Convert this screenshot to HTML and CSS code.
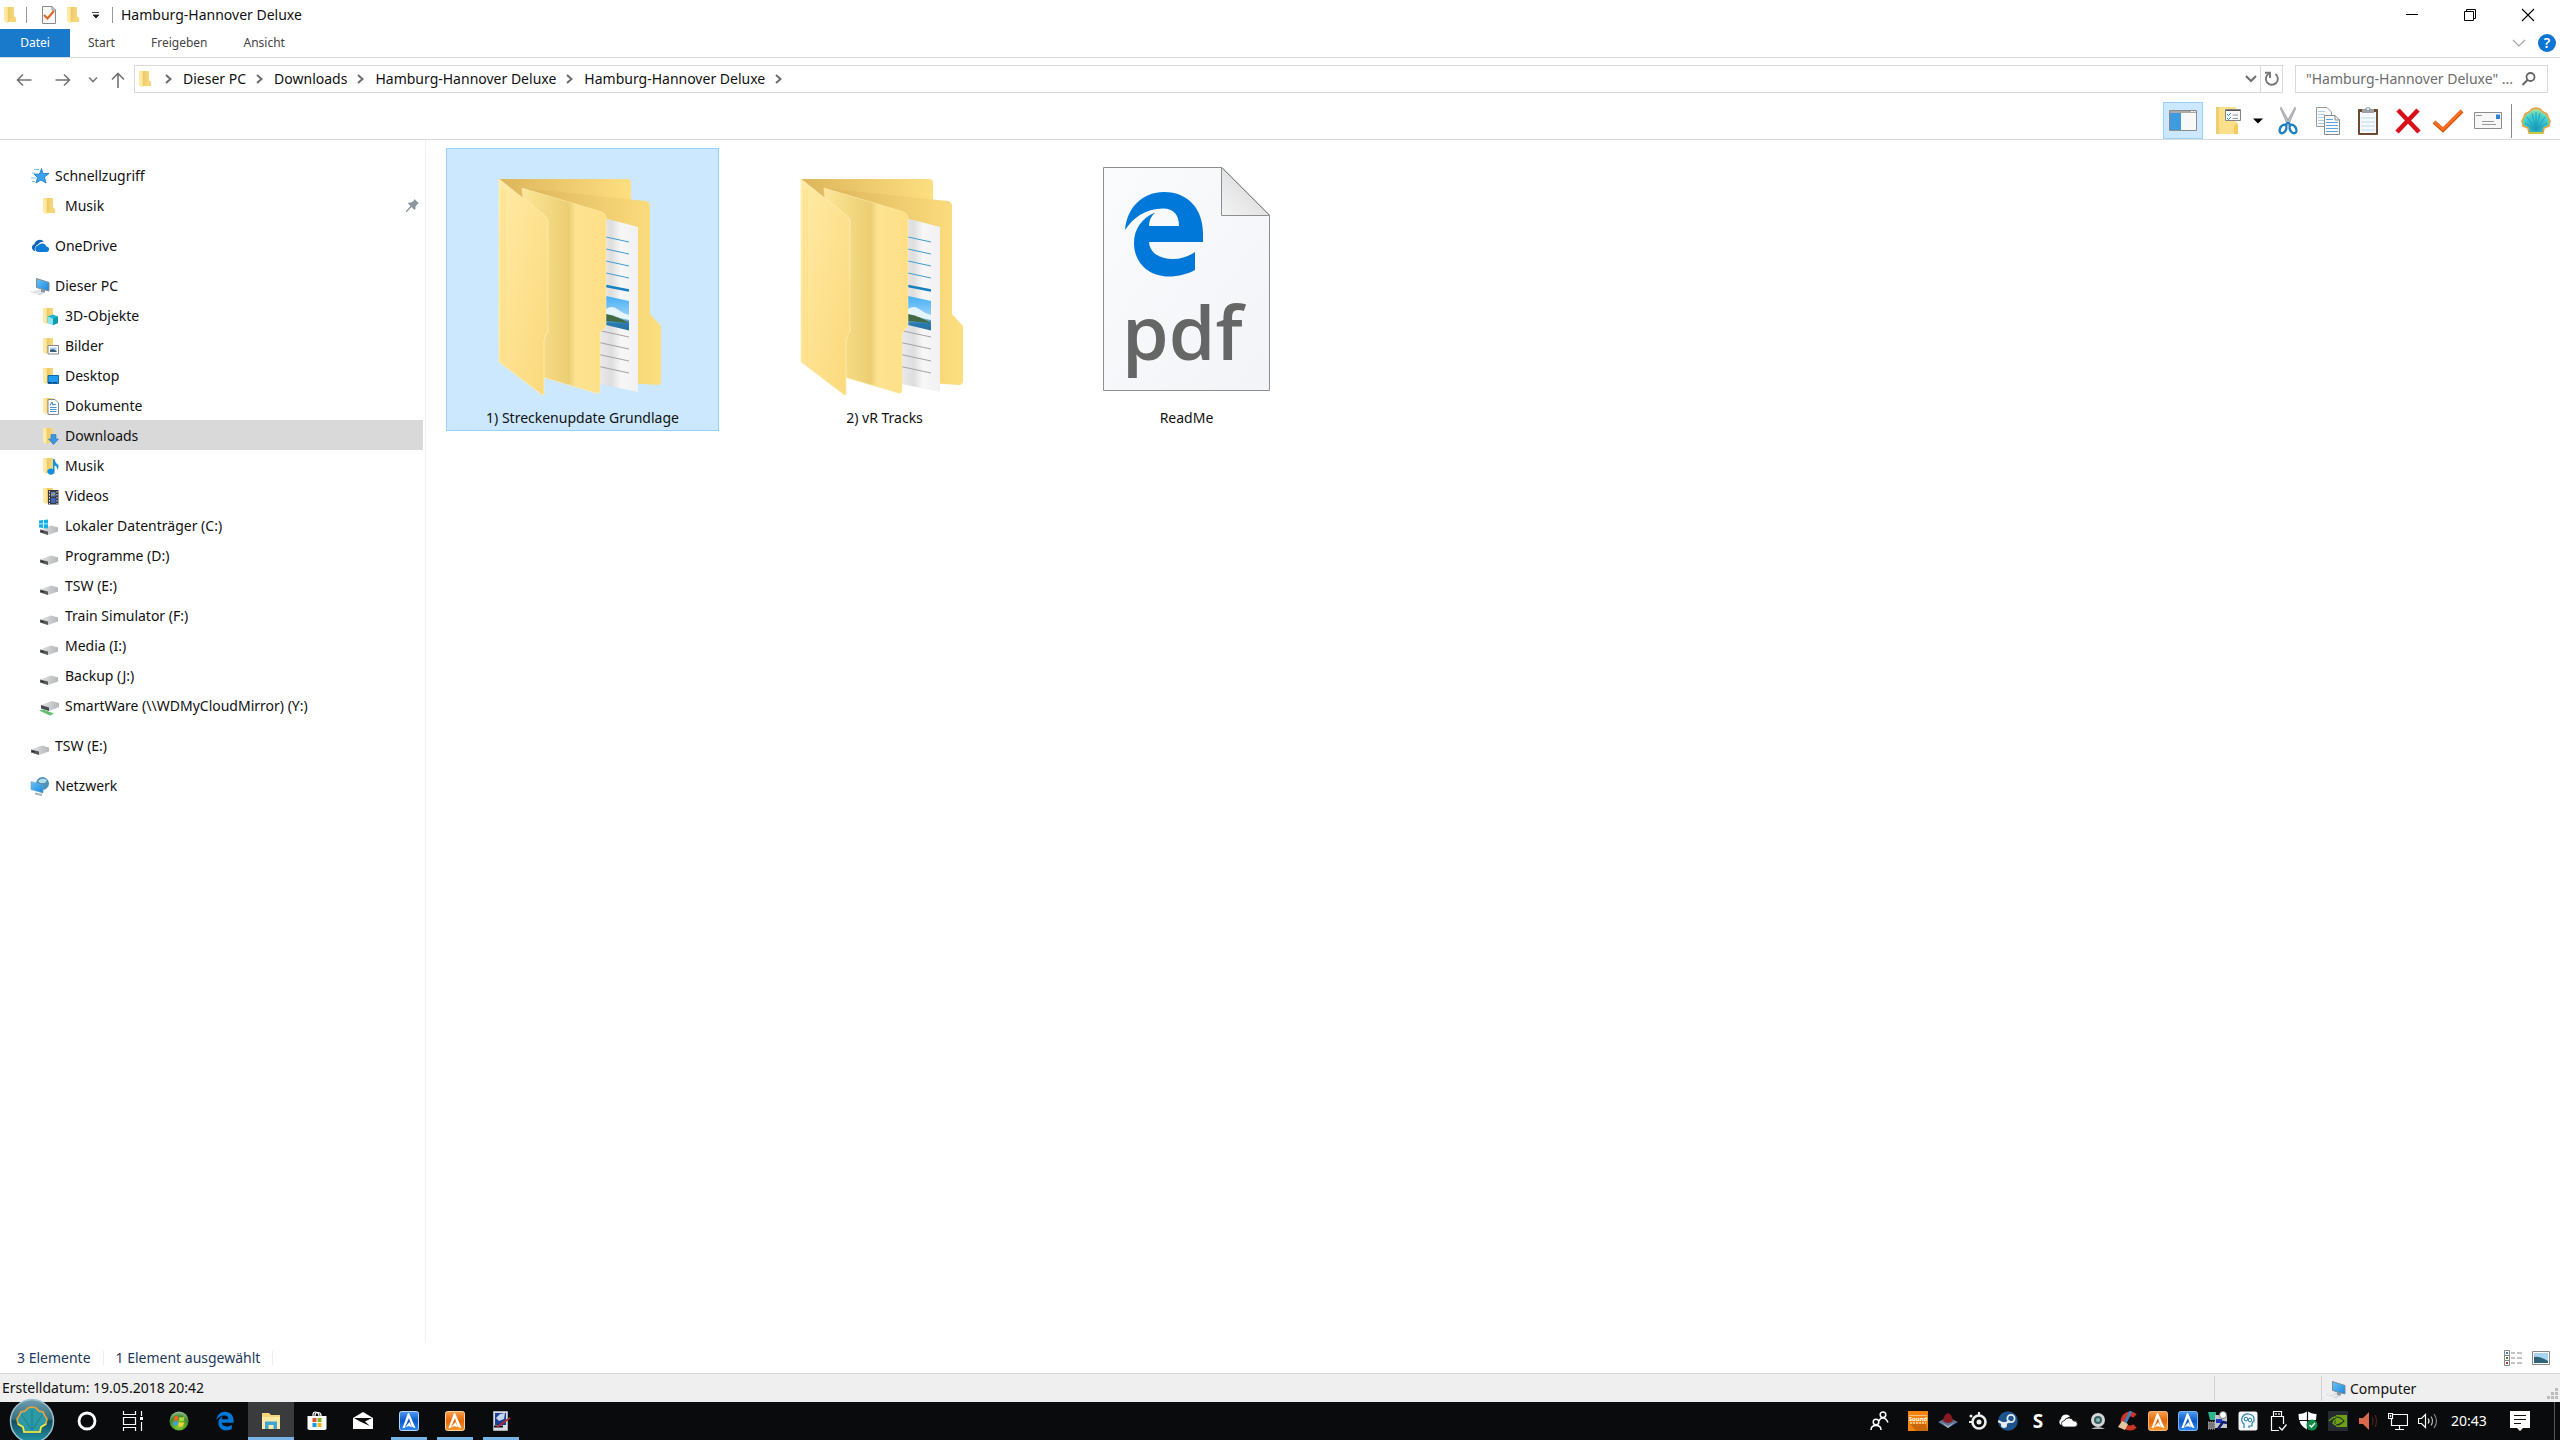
FILE: index.html
```html
<!DOCTYPE html>
<html lang="de">
<head>
<meta charset="utf-8">
<title>Hamburg-Hannover Deluxe</title>
<link rel="stylesheet" href="styles.css">
</head>
<body>
<svg class="sprite" aria-hidden="true">
  <defs>
    <linearGradient id="gFront" x1="0" y1="0" x2="1" y2="1"><stop offset="0" stop-color="#ffeaa6"/><stop offset="1" stop-color="#fbd97b"/></linearGradient>
    <linearGradient id="gBack" x1="0" x2="1"><stop offset="0" stop-color="#ddb55b"/><stop offset="1" stop-color="#fddf80"/></linearGradient>
    <linearGradient id="gMid" x1="0" x2="1"><stop offset="0" stop-color="#fde69c"/><stop offset=".3" stop-color="#f3d983"/><stop offset=".56" stop-color="#ecce73"/><stop offset=".64" stop-color="#fde391"/><stop offset="1" stop-color="#fedf86"/></linearGradient>
    <linearGradient id="gPaper" x1="0" x2="1"><stop offset="0" stop-color="#e9e9eb"/><stop offset=".3" stop-color="#dededf"/><stop offset=".55" stop-color="#f7f7f8"/><stop offset="1" stop-color="#f1f1f2"/></linearGradient>
    <linearGradient id="gPage" x1="0" y1="0" x2="1" y2="1"><stop offset="0" stop-color="#fafbfd"/><stop offset="1" stop-color="#f3f4f7"/></linearGradient>
    <linearGradient id="gCurl" x1="0" y1="1" x2=".7" y2=".3"><stop offset="0" stop-color="#f4f4f4"/><stop offset="1" stop-color="#dcdcdc"/></linearGradient>
    <linearGradient id="gSky" x1="0" y1="0" x2="0" y2="1"><stop offset="0" stop-color="#45aef5"/><stop offset=".6" stop-color="#9bd3f8"/><stop offset=".8" stop-color="#2b7bb0"/><stop offset="1" stop-color="#2a6fa5"/></linearGradient>
    <linearGradient id="gSmall" x1="0" x2="1"><stop offset="0" stop-color="#ffe89f"/><stop offset=".35" stop-color="#fbdf8c"/><stop offset=".45" stop-color="#eecb6b"/><stop offset="1" stop-color="#f8d87b"/></linearGradient>
    <linearGradient id="gScreen" x1="0" y1="0" x2="1" y2="1"><stop offset="0" stop-color="#6cc4fa"/><stop offset="1" stop-color="#1887da"/></linearGradient>
    <linearGradient id="gDrive" x1="0" x2="1"><stop offset="0" stop-color="#e2e3e5"/><stop offset="1" stop-color="#b4b7bb"/></linearGradient>
    <radialGradient id="gShell" cx=".5" cy=".8" r=".8"><stop offset="0" stop-color="#1e9fc0"/><stop offset=".6" stop-color="#41cfd0"/><stop offset="1" stop-color="#b6e69a"/></radialGradient>
    <linearGradient id="gOrb" x1="0" y1="0" x2="0" y2="1"><stop offset="0" stop-color="#6f9daf"/><stop offset=".45" stop-color="#38707f"/><stop offset=".5" stop-color="#124e62"/><stop offset="1" stop-color="#2297a8"/></linearGradient>
    <radialGradient id="gGreen" cx=".5" cy=".75" r=".7"><stop offset="0" stop-color="#8fd636"/><stop offset=".7" stop-color="#3f8a2a"/><stop offset="1" stop-color="#8db988"/></radialGradient>
    <linearGradient id="gBlue" x1="0" y1="0" x2="0" y2="1"><stop offset="0" stop-color="#4e9cf2"/><stop offset=".5" stop-color="#0c59c9"/><stop offset="1" stop-color="#2f8bf5"/></linearGradient>
    <linearGradient id="gOrange" x1="0" y1="0" x2="0" y2="1"><stop offset="0" stop-color="#f7a04c"/><stop offset=".5" stop-color="#e56608"/><stop offset="1" stop-color="#fb9a2c"/></linearGradient>

    <symbol id="folder" viewBox="0 0 20 20"><path d="M4 2H14V17H7L4 15Z" fill="url(#gSmall)"/><path d="M14 11 16 13V17H7V18Z" fill="#f6d778"/><path d="M4 2 7 4.500V18.500L4 16Z" fill="#ffe9a6"/></symbol>
    <symbol id="star" viewBox="0 0 20 20"><path d="M11.500 2.500 13 7.500H19L14.500 11 16 17 11 14 6 17 7.500 11.500 4 8H9.500Z" fill="#3ba3ee" stroke="#1878c4" stroke-width=".8"/><path d="M4 3.500H9M2 7H5M1 12H6M2 15.500H5" stroke="#7fc1ee"/></symbol>
    <symbol id="onedrive" viewBox="0 0 20 20"><path d="M4 15H5A5 5 0 0 1 8 8.500 5.500 5.500 0 0 1 14 6 5.300 5.300 0 0 0 4.500 8 3.800 3.800 0 0 0 4 15Z" fill="#0b62b8"/><path d="M8 16A3.300 3.300 0 0 1 8 9.500 5 5 0 0 1 16.500 10.500 2.800 2.800 0 0 1 17 16Z" fill="#0f7bd8"/></symbol>
    <symbol id="pc" viewBox="0 -1 20 20"><path d="M0 14.500 10 12.500 15 15.500 10 18.500Z" fill="#d5d8dc"/><path d="M2 15 9 13.500M5 17 12 14.500" stroke="#f7f7f7"/><path d="M11 12V15L15 15.500V13Z" fill="#8d979f"/><path d="M6.500 1.500 19 5.500V14L6.500 10.500Z" fill="url(#gScreen)" stroke="#7b8b98"/></symbol>
    <symbol id="drive" viewBox="0 -2 20 20"><path d="M1 11.500 12 7.500 19 9.500V13.500L9 17 1 14.500Z" fill="url(#gDrive)"/><path d="M1 11.500 9 13.500V17L1 14.500Z" fill="#56595c"/><path d="M2 13.200 5 14" stroke="#222"/></symbol>
    <symbol id="drivec" viewBox="0 0 20 20"><use href="#drive" width="20" height="20"/><path d="M0 4.500 4 4V7.500H0ZM4.800 4 9 3.500V7.500H4.800ZM0 8.200H4V12L0 11.500ZM4.800 8.200H9V12.500L4.800 12Z" fill="#15b1e4"/></symbol>
    <symbol id="drivey" viewBox="0 -2 20 20"><path d="M2 7 13 3 20 5V9L10 13 2 10.500Z" fill="url(#gDrive)"/><path d="M2 7 10 9.500V13L2 10.500Z" fill="#4a4d50"/><path d="M0 12.500 4 11.500 15 15.500 11 17.500Z" fill="#5fc06c"/></symbol>
    <symbol id="net" viewBox="0 0 20 20"><circle cx="12.500" cy="7.500" r="6.500" fill="#4d93b8"/><path d="M8 5Q12 1 17 4L15 7 10 7Z" fill="#b7dce9"/><path d="M1 5.500 13 9V17L1 13.500Z" fill="url(#gScreen)" stroke="#6b9fc6" stroke-width=".6"/><path d="M5 17.500 12 19" stroke="#a9b3ba" stroke-width="2"/></symbol>
    <symbol id="f3d" viewBox="0 0 20 20"><use href="#folder"/><path d="M8.500 10.500 14 8.500 19 10.500V17L14 19 8.500 17Z" fill="#22b5cb"/><path d="M8.500 10.500 14 12.500V19L8.500 17Z" fill="#8be5ec"/><path d="M14 12.500 19 10.500V17L14 19Z" fill="#0d98b4"/></symbol>
    <symbol id="fpic" viewBox="0 0 20 20"><use href="#folder"/><path d="M9 9.500H19.500V18H9Z" fill="#fff" stroke="#858b92"/><path d="M11 11.500H17.500V16H11Z" fill="#a9cdf0"/><path d="M11 14 14 13 17.500 15V16H11Z" fill="#3b5d7d"/></symbol>
    <symbol id="fdesk" viewBox="0 0 20 20"><use href="#folder"/><path d="M9 9.500H19.500V17.500H9Z" fill="#1e9df1" stroke="#1169a8"/><path d="M9 16.500H19" stroke="#083d68" stroke-dasharray="4 1"/></symbol>
    <symbol id="fdoc" viewBox="0 0 20 20"><use href="#folder"/><path d="M9 3.500H16L19.500 7V18.500H9Z" fill="#fff" stroke="#858b92"/><path d="M11 11.500H17.500M11 13.500H17.500M11 15.500H17.500M14 8.500H17" stroke="#4495d2"/><path d="M11 9.500 13 6 14 9.500" fill="none" stroke="#2f86c8"/></symbol>
    <symbol id="fdown" viewBox="0 0 20 20"><use href="#folder"/><path d="M12 8.500H17V13H19.500L14.500 18.500 9.500 13H12Z" fill="#3e94de" stroke="#2277c0" stroke-width=".6"/></symbol>
    <symbol id="fmus" viewBox="0 0 20 20"><use href="#folder"/><path d="M14 3H15.500Q16 7 19.500 9 20 12 18 14 18.500 10 15.500 9.500V15.500A3.600 3.200 0 1 1 14 13Z" fill="#1291e4"/></symbol>
    <symbol id="fvid" viewBox="0 0 20 20"><use href="#folder"/><path d="M9 4H19.500V18.500H9Z" fill="#3a3a3f"/><path d="M10.500 5V18M18 5V18" stroke="#ddd" stroke-dasharray="1.500 1.500"/><path d="M12 6H16.500V10.500H12Z" fill="#5f87c9"/><path d="M12 12H16.500V17H12Z" fill="#3768c4"/><path d="M12 9 16 7.500" stroke="#d0a54e"/></symbol>
    <symbol id="shell" viewBox="0 0 30 28"><path d="M8 26 7 21 2 19 1 14 3 10 4 7 8 5 11 2 15 1 19 2 22 5 26 7 27 10 29 14 28 19 23 21 22 26Z" fill="url(#gShell)" stroke="#f0a23a" stroke-width="1.600" stroke-linejoin="round"/><path d="M15 24 6 10M15 24 11 6M15 24V5M15 24 19 6M15 24 24 10M15 24 4 16M15 24 26 16" stroke="#1b9ab5" stroke-width=".8"/><path d="M8 26H22" stroke="#cfc63d" stroke-width="2"/></symbol>
    <symbol id="avira" viewBox="0 0 20 20"><path d="M10 2 16.500 17Q12.500 17 11.500 12L10 7 5.500 17H3.500L9 2Z M10.500 11 13 16.500Q8.500 14 5.500 17Z" fill="#fff"/></symbol>
    <symbol id="bigfolder" viewBox="0 0 256 256"><g transform="translate(44 29)">
      <path d="M0 1H128Q132 1 132 5V60H24Z" fill="url(#gBack)"/>
      <path d="M23 10 147 23Q151 24 151 28V136L162 148V203Q162 207 158 207L100 203Z" fill="url(#gBack)"/>
      <path d="M101 39 139 49V214L101 206Z" fill="url(#gPaper)"/>
      <path d="M107 59 130 64M107 71 130 76M107 83 130 88M107 95 130 100" stroke="#3f9dd2"/>
      <path d="M107 108 130 112.500" stroke="#1680c0" stroke-width="2.500"/>
      <path d="M107 118 130 123V152.500L107 147Z" fill="url(#gSky)"/>
      <path d="M107 131Q113 127 118 131T130 137V142L107 137Z" fill="#e6f4fc"/><path d="M107 136Q118 138 130 145L107 143Z" fill="#416b45"/>
      <path d="M100 152.500 130 159M100 164.500 130 171M100 176.500 130 183M100 188.500 130 195" stroke="#a3a3a5"/>
      <path d="M23 10 103 34Q107 36 107 40V148L101 155V212Q101 216 97 215L43 199Z" fill="url(#gMid)" stroke="#ffedb0" stroke-width=".6"/>
      <path d="M0 1 46 38Q49 40 49 44V152Q49 155 47 157L45 162V215Q45 219 42 216L0 184Z" fill="url(#gFront)" stroke="#ffeeb4" stroke-width=".8"/>
      <path d="M3 11V180M6 11V183M30 17 35 19V28" fill="none" stroke="#fbdd78" stroke-width=".8"/>
    </g></symbol>
  </defs>
</svg>

<header class="window-head">
  <div class="titlebar">
    <svg class="ico20"><use href="#folder"/></svg>
    <span class="vsep"></span>
    <button class="qat" aria-label="Eigenschaften"><svg width="16" height="20" viewBox="0 0 16 20"><path d="M1.500 1.500H11L14.500 5V18.500H1.500Z" fill="#f8f8f8" stroke="#8a8a8a"/><path d="M11 1.500V5H14.500" fill="none" stroke="#8a8a8a"/><path d="M3 10 6.500 13.500 13 6" fill="none" stroke="#e2611c" stroke-width="2"/></svg></button>
    <button class="qat" aria-label="Neuer Ordner"><svg class="ico20"><use href="#folder"/></svg></button>
    <button class="qat more" aria-label="Schnellzugriff anpassen"><svg width="10" height="8" viewBox="0 0 10 8"><path d="M1 1.500H8M2 4H8L5 7Z" stroke="#222" fill="#222" stroke-width=".8"/></svg></button>
    <span class="vsep last"></span>
    <h1 class="title">Hamburg-Hannover Deluxe</h1>
    <div class="win-controls">
      <button aria-label="Minimieren"><svg width="14" height="14" viewBox="0 0 14 14"><path d="M1 6.500H13" stroke="#000"/></svg></button>
      <button aria-label="Wiederherstellen"><svg width="14" height="14" viewBox="0 0 14 14"><path d="M1.500 3.500H10.500V12.500H1.500ZM3.500 3V1.500H12.500V10.500H11" fill="none" stroke="#000"/></svg></button>
      <button aria-label="Schließen"><svg width="14" height="14" viewBox="0 0 14 14"><path d="M1 1 13 13M13 1 1 13" stroke="#000" stroke-width="1.100"/></svg></button>
    </div>
  </div>
  <nav class="ribbon">
    <button class="tab file">Datei</button>
    <button class="tab">Start</button>
    <button class="tab">Freigeben</button>
    <button class="tab">Ansicht</button>
    <span class="grow"></span>
    <button class="expand" aria-label="Menüband erweitern"><svg width="14" height="8" viewBox="0 0 14 8"><path d="M1 1 7 7 13 1" fill="none" stroke="#a5a5a5" stroke-width="1.200"/></svg></button>
    <button class="help" aria-label="Hilfe">?</button>
  </nav>
  <div class="addressrow">
    <div class="navbtns">
      <button aria-label="Zurück"><svg width="16" height="14" viewBox="0 0 16 14"><path d="M15.500 7H1.500M7 1.500 1.500 7 7 12.500" fill="none" stroke="#737373" stroke-width="1.600"/></svg></button>
      <button aria-label="Vorwärts"><svg width="16" height="14" viewBox="0 0 16 14"><path d="M.5 7H14.500M9 1.500 14.500 7 9 12.500" fill="none" stroke="#737373" stroke-width="1.600"/></svg></button>
      <button class="small" aria-label="Verlauf"><svg width="10" height="8" viewBox="0 0 10 8"><path d="M1 1.500 5 5.500 9 1.500" fill="none" stroke="#7c7c7c" stroke-width="1.600"/></svg></button>
      <button aria-label="Nach oben"><svg width="14" height="16" viewBox="0 0 14 16"><path d="M7 16V2M1 7.500 7 1.500 13 7.500" fill="none" stroke="#737373" stroke-width="1.600"/></svg></button>
    </div>
    <div class="address">
      <svg class="ico20"><use href="#folder"/></svg>
      <svg class="chev" viewBox="0 0 7 10"><path d="M1 1 5.500 5 1 9"/></svg><a href="#">Dieser PC</a>
      <svg class="chev" viewBox="0 0 7 10"><path d="M1 1 5.500 5 1 9"/></svg><a href="#">Downloads</a>
      <svg class="chev" viewBox="0 0 7 10"><path d="M1 1 5.500 5 1 9"/></svg><a href="#">Hamburg-Hannover Deluxe</a>
      <svg class="chev" viewBox="0 0 7 10"><path d="M1 1 5.500 5 1 9"/></svg><a href="#">Hamburg-Hannover Deluxe</a>
      <svg class="chev" viewBox="0 0 7 10"><path d="M1 1 5.500 5 1 9"/></svg>
      <span class="grow"></span>
      <button class="drop" aria-label="Vorherige Orte"><svg width="12" height="8" viewBox="0 0 12 8"><path d="M1 1 6 6 11 1" fill="none" stroke="#6d6d6d" stroke-width="2"/></svg></button>
      <button class="refresh" aria-label="Aktualisieren"><svg width="16" height="16" viewBox="0 0 16 16"><path d="M5 2.500A6 6 0 1 0 11.500 3" fill="none" stroke="#777" stroke-width="1.900"/><path d="M1 1.800H6V7" fill="none" stroke="#777" stroke-width="1.900"/></svg></button>
    </div>
    <div class="search">
      <input type="text" aria-label="Suchen" placeholder="&quot;Hamburg-Hannover Deluxe&quot; ...">
      <svg width="16" height="16" viewBox="0 0 16 16"><circle cx="9.500" cy="6" r="4" fill="none" stroke="#666" stroke-width="1.800"/><path d="M6.500 9 1.500 14" stroke="#666" stroke-width="2"/></svg>
    </div>
  </div>
  <div class="toolbar">
    <button class="tool on" aria-label="Navigationsbereich"><svg width="28" height="22" viewBox="0 0 28 22"><path d="M.5 .5H27.500V20.500H.5Z" fill="#f8f8f8" stroke="#8c8c8c"/><path d="M1 1H27V3H1Z" fill="#a9a9a9"/><path d="M1 3H12V20H1Z" fill="#3f9ae0"/><path d="M22 1.500H24M25 1.500H26.500" stroke="#fff"/></svg></button>
    <button class="tool wide" aria-label="Ordneroptionen"><svg width="26" height="30" viewBox="0 0 26 30"><path d="M1 1H21V28H1Z" fill="#fbe08b"/><path d="M1 1H4V28H1Z" fill="#efcd72"/><path d="M19 28V20L22 16 23 20V28Z" fill="#f5c95d"/><path d="M10.500 3.500H25.500V14.500H10.500Z" fill="#f7f9fb" stroke="#858585"/><path d="M11 4.500H25" stroke="#555"/><path d="M12 8 13.500 9.500 16 7M12 12 13.500 13.500 16 11" fill="none" stroke="#2a86cf"/><path d="M17.500 9H23M17.500 12.500H23" stroke="#999"/></svg><svg width="10" height="6" viewBox="0 0 10 6"><path d="M0 .5H10L5 5.500Z"/></svg></button>
    <button class="tool" aria-label="Ausschneiden"><svg width="20" height="30" viewBox="0 0 20 30"><path d="M3 1 12 17 10 20 2.500 3ZM17 1 8 17 10 20 17.500 3Z" fill="#b9bdc2" stroke="#8b9197" stroke-width=".6"/><ellipse cx="5" cy="23" rx="3" ry="4.500" transform="rotate(28 5 23)" fill="none" stroke="#1d80c3" stroke-width="2.400"/><ellipse cx="15" cy="23" rx="3" ry="4.500" transform="rotate(-28 15 23)" fill="none" stroke="#1d80c3" stroke-width="2.400"/><path d="M7 19 10 16.500 13 19" fill="none" stroke="#1d80c3" stroke-width="2"/></svg></button>
    <button class="tool" aria-label="Kopieren"><svg width="26" height="30" viewBox="0 0 26 30"><path d="M1.500 1.500H12L16.500 6V20.500H1.500Z" fill="#fafafa" stroke="#9a9a9a"/><path d="M3 5.500H10M3 8.500H10M3 11.500H9M3 14.500H9M3 17.500H9" stroke="#a9cfec"/><path d="M9.500 9.500H20L24.500 14V28.500H9.500Z" fill="#fafafa" stroke="#8a8a8a"/><path d="M20 9.500V14H24.500" fill="none" stroke="#8a8a8a"/><path d="M11 13.500H18M11 16.500H23M11 19.500H23M11 22.500H23M11 25.500H23" stroke="#5aa5de"/></svg></button>
    <button class="tool" aria-label="Einfügen"><svg width="22" height="30" viewBox="0 0 22 30"><rect x="1" y="3" width="20" height="26" rx="1" fill="#6e4a31"/><path d="M3 6H19V27H3Z" fill="#f6f9fb"/><path d="M4 12H18M4 16H18M4 20H18M4 24H18" stroke="#bcd9ee"/><path d="M5 3H8Q11-1 14 3H17V7H5Z" fill="#9b9fa3"/><circle cx="11" cy="3" r="1" fill="#fff"/></svg></button>
    <button class="tool" aria-label="Löschen"><svg width="26" height="26" viewBox="0 0 26 26"><path d="M3 2 24 24M23 2 2 24" stroke="#d90f1c" stroke-width="4.600"/></svg></button>
    <button class="tool" aria-label="Eigenschaften"><svg width="32" height="26" viewBox="0 0 32 26"><path d="M2 14 11 22 30 3" fill="none" stroke="#c9500c" stroke-width="4"/><path d="M2.500 14 11 21.500 29.500 3" fill="none" stroke="#f8701c" stroke-width="2.600"/></svg></button>
    <button class="tool" aria-label="E-Mail"><svg width="28" height="18" viewBox="0 0 28 18"><path d="M.5 .5H27.500V16.500H.5Z" fill="#f7f7f7" stroke="#8c8c8c"/><path d="M2 3.500H8M8 9.500H20M8 12.500H22" stroke="#999"/><path d="M22 2.500H26V7H22Z" fill="#2d84d6"/></svg></button>
    <span class="toolsep"></span>
    <button class="tool" aria-label="Classic Shell"><svg width="30" height="28"><use href="#shell"/></svg></button>
  </div>
</header>

<main class="panes">
  <nav class="tree" aria-label="Navigation">
    <ul>
      <li class="top"><a href="#"><svg class="ico20"><use href="#star"/></svg>Schnellzugriff</a></li>
      <li><a href="#"><svg class="ico20"><use href="#folder"/></svg>Musik<svg class="pin" viewBox="0 0 13 13"><path d="M8.500 0 13 4.500 11.500 5 9.500 7.500V10L8.500 11 5.500 8 1 13 0 13 0 12 4.500 7 2 4.500 3 3.500H5.500L8 1.500Z" fill="#8d959e"/></svg></a></li>
    </ul>
    <ul><li class="top"><a href="#"><svg class="ico20"><use href="#onedrive"/></svg>OneDrive</a></li></ul>
    <ul>
      <li class="top"><a href="#"><svg class="ico20"><use href="#pc"/></svg>Dieser PC</a></li>
      <li><a href="#"><svg class="ico20"><use href="#f3d"/></svg>3D-Objekte</a></li>
      <li><a href="#"><svg class="ico20"><use href="#fpic"/></svg>Bilder</a></li>
      <li><a href="#"><svg class="ico20"><use href="#fdesk"/></svg>Desktop</a></li>
      <li><a href="#"><svg class="ico20"><use href="#fdoc"/></svg>Dokumente</a></li>
      <li class="current"><a href="#"><svg class="ico20"><use href="#fdown"/></svg>Downloads</a></li>
      <li><a href="#"><svg class="ico20"><use href="#fmus"/></svg>Musik</a></li>
      <li><a href="#"><svg class="ico20"><use href="#fvid"/></svg>Videos</a></li>
      <li><a href="#"><svg class="ico20"><use href="#drivec"/></svg>Lokaler Datenträger (C:)</a></li>
      <li><a href="#"><svg class="ico20"><use href="#drive"/></svg>Programme (D:)</a></li>
      <li><a href="#"><svg class="ico20"><use href="#drive"/></svg>TSW (E:)</a></li>
      <li><a href="#"><svg class="ico20"><use href="#drive"/></svg>Train Simulator (F:)</a></li>
      <li><a href="#"><svg class="ico20"><use href="#drive"/></svg>Media (I:)</a></li>
      <li><a href="#"><svg class="ico20"><use href="#drive"/></svg>Backup (J:)</a></li>
      <li><a href="#"><svg class="ico20"><use href="#drivey"/></svg>SmartWare (\\WDMyCloudMirror) (Y:)</a></li>
    </ul>
    <ul><li class="top"><a href="#"><svg class="ico20"><use href="#drive"/></svg>TSW (E:)</a></li></ul>
    <ul><li class="top"><a href="#"><svg class="ico20"><use href="#net"/></svg>Netzwerk</a></li></ul>
  </nav>
  <section class="files" aria-label="Dateien">
    <a class="file-item selected" href="#"><svg width="256" height="256"><use href="#bigfolder"/></svg><span>1) Streckenupdate Grundlage</span></a>
    <a class="file-item" href="#"><svg width="256" height="256"><use href="#bigfolder"/></svg><span>2) vR Tracks</span></a>
    <a class="file-item" href="#"><svg width="256" height="256" viewBox="0 0 256 256"><g transform="translate(44 18)">
      <path d="M.5 .5H119L166.500 48V223.500H.5Z" fill="url(#gPage)" stroke="#8e8e90"/>
      <path d="M118.500 .5V48.500H166.500Z" fill="url(#gCurl)" stroke="#8e8e90"/>
      <path d="M22 63C24 40 40 25 61 25C86 25 100 43 100 66V75H46C47 87 58 92 70 92C79 92 86 89 92 85V103C85 107 75 109.500 66 109.500C45 109.500 31 95 31 76C31 62 39 51 52 45.500C48 49 46 54 46 59H76C76 48 71 41.500 60 41.500C42 41.500 30 51 22 63Z" fill="#0078d9"/>
      <text class="pdf-text" x="19" y="193">pdf</text></g></svg><span>ReadMe</span></a>
  </section>
</main>

<footer class="status">
  <div class="statusbar">
    <span class="stat">3 Elemente</span><span class="stat">1 Element ausgewählt</span>
    <span class="grow"></span>
    <button aria-label="Details"><svg width="20" height="18" viewBox="0 0 20 18"><path d="M1.500 1.500H6.500V16.500H1.500ZM1.500 6.500H6.500M1.500 11.500H6.500M8 4H12M14 4H19M8 9H12M14 9H19M8 14H12M14 14H19" fill="none" stroke="#888"/><path d="M3 3H5V5H3Z" fill="#4586b5"/><path d="M3 8H5V10H3Z" fill="#557d45"/><path d="M3 13H5V15H3Z" fill="#b03a2a"/></svg></button>
    <button aria-label="Große Symbole"><svg width="20" height="18" viewBox="0 0 20 18"><path d="M1.500 2.500H18.500V15.500H1.500Z" fill="#fff" stroke="#888"/><path d="M3 4H17V14H3Z" fill="#a8d3f3"/><path d="M3 8Q9 7 17 12V14H3Z" fill="#2d6577"/></svg></button>
  </div>
  <div class="classicbar">
    <span class="date">Erstelldatum: 19.05.2018 20:42</span>
    <span class="cell"></span>
    <span class="cell zone"><svg class="ico20"><use href="#pc"/></svg>Computer</span>
    <svg class="grip" width="12" height="12" viewBox="0 0 12 12"><path d="M8 0H11V3H8ZM4 4H7V7H4ZM8 4H11V7H8ZM0 8H3V11H0ZM4 8H7V11H4ZM8 8H11V11H8Z" fill="#bcbcbc"/></svg>
  </div>
</footer>

<footer class="taskbar">
  <button class="start" aria-label="Start"><svg width="46" height="46" viewBox="0 0 46 46"><circle cx="23" cy="23" r="21.500" fill="url(#gOrb)" stroke="#9cc3cf" stroke-width="1.500"/><path d="M15 34 14 29 9 26 8 21 10 18 12 14 16 13 19 10 23 9 27 10 30 13 34 14 36 18 38 21 37 26 32 29 31 34Z" fill="#2c9aa5" stroke="#e9a53c" stroke-width="1.600"/><path d="M9 26 14 29 15 34H31L32 29 37 26" fill="none" stroke="#e3ea4a" stroke-width="1.600"/><path d="M23 32V12M23 32 13 17M23 32 33 17" stroke="#1c7f93"/></svg></button>
  <button class="task" aria-label="Cortana"><svg width="20" height="20" viewBox="0 0 20 20"><circle cx="10" cy="10" r="8" fill="none" stroke="#fff" stroke-width="2.800"/></svg></button>
  <button class="task" aria-label="Taskansicht"><svg width="22" height="20" viewBox="0 0 22 20"><path d="M1.500 0V3.500H13.500V0M1.500 20V16.500H13.500V20M1.500 6.500H13.500V13.500H1.500ZM19.500 0V5M19.500 11V20" fill="none" stroke="#fff" stroke-width="1.200"/><path d="M18 6H21V9H18Z" fill="#fff"/></svg></button>
  <button class="task" aria-label="Media Center"><svg width="20" height="20" viewBox="0 0 20 20"><circle cx="10" cy="10" r="9.500" fill="url(#gGreen)"/><path d="M5 6Q7 4.500 9.500 5.500L9 9.500Q7 9 4.500 10Z" fill="#e8622c"/><path d="M10.500 6Q13 7 15.500 5.500L15 9.500Q12 11 10 9.500Z" fill="#a9d941"/><path d="M4.500 11Q7 10 9 10.500L8.500 14.500Q6 14 4 14.500Z" fill="#3f9be6"/><path d="M10 11Q12 12 15 11L14 15Q12 16 9.500 15Z" fill="#fbcf36"/></svg></button>
  <button class="task" aria-label="Edge"><svg width="18" height="20" viewBox="20 23 82 88"><path d="M22 63C24 40 40 25 61 25C86 25 100 43 100 66V75H46C47 87 58 92 70 92C79 92 86 89 92 85V103C85 107 75 109.500 66 109.500C45 109.500 31 95 31 76C31 62 39 51 52 45.500C48 49 46 54 46 59H76C76 48 71 41.500 60 41.500C42 41.500 30 51 22 63Z" fill="#0078d9"/></svg></button>
  <button class="task active" aria-label="Explorer"><svg width="20" height="18" viewBox="0 0 20 18"><path d="M1 1H8L10 3H19V17H1Z" fill="#f6d57a"/><path d="M1 5H19V17H1Z" fill="#fde8a4"/><path d="M4 17V9.500H16V17H12.500V13H7.500V17Z" fill="#3fa5d8"/></svg></button>
  <button class="task" aria-label="Store"><svg width="20" height="20" viewBox="0 0 20 20"><path d="M6 6V4Q6 1 8.500 1T12 4V6M8 6V4Q8 1.500 11 1.500T14 4.500V6" fill="none" stroke="#fff" stroke-width="1.200"/><path d="M.5 5H19.500V18L18 19H2L.5 18Z" fill="#fff"/><path d="M5.500 7H9.500V11H5.500Z" fill="#e2512c"/><path d="M10.500 7H14.500V11H10.500Z" fill="#7cb71d"/><path d="M5.500 12H9.500V16H5.500Z" fill="#1499dd"/><path d="M10.500 12H14.500V16H10.500Z" fill="#f5b41c"/></svg></button>
  <button class="task" aria-label="Mail"><svg width="20" height="18" viewBox="0 0 20 18"><path d="M0 6 10 0 20 6V17H0Z" fill="#fff"/><path d="M1 6H19L12 9.500 17 14 7 9.500Z" fill="#0b0b0c"/></svg></button>
  <button class="task running" aria-label="Avira"><svg width="20" height="20" viewBox="0 0 20 20"><rect x=".5" y=".5" width="19" height="19" rx="2" fill="url(#gBlue)" stroke="#b9d6f6"/><use href="#avira"/></svg></button>
  <button class="task running" aria-label="Avira Antivirus"><svg width="20" height="20" viewBox="0 0 20 20"><rect x=".5" y=".5" width="19" height="19" rx="2" fill="url(#gOrange)" stroke="#f9d3a8"/><use href="#avira"/></svg></button>
  <button class="task running" aria-label="Zusi"><svg width="20" height="20" viewBox="0 0 20 20"><path d="M2.500 .5H16.500V19.500H2.500Z" fill="#d6dde8" stroke="#a9abad"/><path d="M4 2H15V14H4Z" fill="#1c3f92"/><path d="M5 7 9 3 14 2 13 8 8 10Z" fill="#c4d5ee"/><path d="M3 15.500H12" stroke="#111" stroke-width="2"/><path d="M6 16 19 7" stroke="#a82c35" stroke-width="1.800"/></svg></button>
  <span class="grow"></span>
  <button class="tray people" aria-label="Kontakte"><svg width="20" height="20" viewBox="0 0 20 20"><circle cx="6" cy="11" r="2.800"/><circle cx="13" cy="3.800" r="2.800"/><path d="M1 19Q1 14.500 6 14.500T11 19M9 10Q10 7 13 7T18 11.500"/></svg></button>
  <button class="tray" aria-label="Sound Blaster"><svg width="20" height="20" viewBox="0 0 20 20"><path d="M0 0H20V20H0Z" fill="#f5840f"/><path d="M2 13H18L20 20H8Z" fill="#c9670a"/><text class="sound-text" x="10" y="10">Sound</text><path d="M2 12H18" stroke="#fff" stroke-dasharray="2 1"/><path d="M1 4.500H19" stroke="#fff" stroke-width=".5"/></svg></button>
  <button class="tray" aria-label="Treiber"><svg width="20" height="20" viewBox="0 0 20 20"><path d="M0 11 10 6 20 11 10 17Z" fill="#5b7492"/><path d="M3 11 10 15 17 11 10 17Z" fill="#a5b4c8"/><path d="M5 10Q6 3 10 2Q14 3 15 10Q10 14 5 10Z" fill="#8a1822"/></svg></button>
  <button class="tray" aria-label="SteelSeries"><svg width="20" height="20" viewBox="0 0 20 20"><circle cx="11" cy="11" r="6.500" fill="none" stroke="#eee" stroke-width="2.600"/><circle cx="11" cy="11" r="2.500" fill="#eee"/><circle cx="3" cy="5" r="1.500" fill="#eee"/><path d="M1 11H5M11 1V5" stroke="#eee" stroke-width="2.200"/></svg></button>
  <button class="tray" aria-label="Steam"><svg width="20" height="20" viewBox="0 0 20 20"><circle cx="10" cy="10" r="9.800" fill="#1d548c"/><circle cx="13" cy="7.500" r="3.600" fill="none" stroke="#e7edf3" stroke-width="1.800"/><path d="M0 10 6 13 12 10" fill="none" stroke="#e7edf3" stroke-width="2.400"/><circle cx="6" cy="14" r="3" fill="#e7edf3"/></svg></button>
  <button class="tray s" aria-label="Sonic">S</button>
  <button class="tray" aria-label="OneDrive"><svg width="20" height="20" viewBox="0 0 20 20"><path d="M3 14A3.500 3.500 0 0 1 3 8 5 5 0 0 1 12 5.500L7 8 5 14Z" fill="#fff"/><path d="M6 16A3.300 3.300 0 0 1 6.500 9.500 5 5 0 0 1 15.500 10A3 3 0 0 1 17 16Z" fill="#fff" stroke="#111" stroke-width=".8"/></svg></button>
  <button class="tray" aria-label="Webcam"><svg width="20" height="20" viewBox="0 0 20 20"><path d="M3 18Q10 14 17 18Z" fill="#bbb"/><circle cx="10" cy="9" r="7" fill="#d4d6d6"/><circle cx="10" cy="9" r="4" fill="#375d60"/><circle cx="10" cy="9" r="2" fill="#7dbbb5"/></svg></button>
  <button class="tray" aria-label="CCleaner"><svg width="20" height="20" viewBox="0 0 20 20"><path d="M17 5A7 7 0 1 0 17 15" fill="none" stroke="#cf3526" stroke-width="5"/><path d="M13 0 7 12" stroke="#3e7ec0" stroke-width="3"/><path d="M4 10 10 13 7 19 0 16Z" fill="#e4c79d"/></svg></button>
  <button class="tray" aria-label="Avira Antivirus"><svg width="20" height="20" viewBox="0 0 20 20"><rect x=".5" y=".5" width="19" height="19" rx="2" fill="url(#gOrange)" stroke="#f2b577"/><use href="#avira"/></svg></button>
  <button class="tray" aria-label="Avira"><svg width="20" height="20" viewBox="0 0 20 20"><rect x=".5" y=".5" width="19" height="19" rx="2" fill="url(#gBlue)" stroke="#7fb4f2"/><use href="#avira"/></svg></button>
  <button class="tray" aria-label="Netzwerkmonitor"><svg width="20" height="20" viewBox="0 0 20 20"><path d="M0 1H8V9H2Z" fill="#2bb78d"/><path d="M7 4H19V17H7Z" fill="#c3c6c8"/><circle cx="15" cy="4" r="3.500" fill="#fff" stroke="#777"/><path d="M8 8H14V12H8Z" fill="#1836c0"/><path d="M0 11H7V18H0Z" fill="#777" stroke="#bbb" stroke-dasharray="1 1"/><path d="M10 18 15 11 19 12" stroke="#101c6b" stroke-width="2.500" fill="none"/></svg></button>
  <button class="tray" aria-label="Assistent"><svg width="20" height="20" viewBox="0 0 20 20"><rect x=".5" y=".5" width="19" height="19" rx="2" fill="#f4f8fa"/><path d="M6 17V13Q3 11 4 7 6 2 11 3 17 4 16 10L14 12V15H11V17" fill="none" stroke="#2a82ad" stroke-width="1.200"/><circle cx="8" cy="8" r="1.800" fill="none" stroke="#2a82ad"/><circle cx="12" cy="9" r="1.800" fill="none" stroke="#2a82ad"/></svg></button>
  <button class="tray" aria-label="USB"><svg class="line" width="20" height="22" viewBox="0 0 20 22"><path d="M5.500 6.500V1.500H13.500V6.500M11 20.500H3.500V6.500H15.500V14M8 3V5M11 3V5M11 17 14 20 18.500 14.500"/></svg></button>
  <button class="tray" aria-label="Sicherheit"><svg width="20" height="20" viewBox="0 0 20 20"><path d="M9.500 0Q13 3 18.500 3 19 14 9.500 19 0 14 .5 3 6 3 9.500 0Z" fill="#fff"/><path d="M9.500 0V19M0 9.500H19" stroke="#111" stroke-width="1.200"/><circle cx="14" cy="14" r="5.500" fill="#138a45"/><path d="M11.500 14 13.500 16 17 12" fill="none" stroke="#fff" stroke-width="1.300"/></svg></button>
  <button class="tray" aria-label="NVIDIA"><svg width="20" height="20" viewBox="0 0 20 20"><path d="M0 0H20V20H0Z" fill="#252b30"/><path d="M8 4H19V16H8Z" fill="#6ca112"/><path d="M1 10Q8 2 15 10 9 17 5 12 7 6 12 10 9 13 7 11" fill="none" stroke="#6ca112" stroke-width="1.500"/><path d="M8 6Q13 6 16 10 12 14 8 14" fill="none" stroke="#252b30" stroke-width="1.200"/></svg></button>
  <button class="tray" aria-label="Sound"><svg width="20" height="20" viewBox="0 0 20 20"><path d="M1 7H5L11 1V19L5 13H1Z" fill="#d9694e"/><path d="M14 6Q16 10 14 14M17 4Q20 10 17 16" fill="none" stroke="#4b2018" stroke-width="1.300"/></svg></button>
  <button class="tray" aria-label="Netzwerk"><svg class="line" width="20" height="20" viewBox="0 0 20 20"><path d="M5 3.500H19.500V14.500H3.500V8M11.500 15V18M7 18.500H16M.5 2.500H4.500V7.500H.5ZM2.500 4V6"/></svg></button>
  <button class="tray" aria-label="Lautstärke"><svg class="line" width="20" height="20" viewBox="0 0 20 20"><path d="M.5 7.500H3.500L7.500 3.500V16.500L3.500 12.500H.5ZM10 7.500Q12 10 10 12.500"/><path d="M13 5.500Q16 10 13 14.500" opacity=".7"/><path d="M16 3Q21 10 16 17" opacity=".5"/></svg></button>
  <time class="clock">20:43</time>
  <button class="notif" aria-label="Info-Center"><svg width="20" height="20" viewBox="0 0 20 20"><path d="M0 0H20V17H13L10 20 7 17H0Z" fill="#fff"/><path d="M4 4.500H16M4 8.500H16M4 12.500H11" stroke="#111" stroke-width="1.200"/></svg></button>
  <button class="showdesk" aria-label="Desktop anzeigen"></button>
</footer>
</body>
</html>
```
FILE: styles.css
```css
* { box-sizing: border-box; }
body {
  margin: 0;
  min-height: 100vh;
  display: flex;
  flex-direction: column;
  background: #fff;
  color: #111;
  font: 14px/20px "Noto Sans", "Open Sans", sans-serif;
}
button {
  display: flex;
  align-items: center;
  justify-content: center;
  margin: 0;
  padding: 0;
  border: 0;
  background: none;
  color: inherit;
  font: inherit;
}
a { color: inherit; text-decoration: none; }
ul { list-style: none; margin: 0; padding: 0; }
svg { display: block; flex: none; }
.sprite { position: absolute; width: 0; height: 0; }
.ico20 { width: 20px; height: 20px; }
.grow { flex: 1; }

/* Title bar */
.titlebar { display: flex; align-items: center; height: 29px; }
.vsep { width: 1px; height: 16px; margin: 0 14px 0 6px; background: #999; }
.vsep.last { margin: 0 8px 0 11px; }
.qat + .qat { margin-left: 6px; }
.qat + .more { margin-left: 8px; }
.title { margin: 0; font-size: 14px; font-weight: 400; }
.win-controls { display: flex; margin-left: auto; padding-right: 3px; }
.win-controls button { width: 58px; height: 28px; }

/* Ribbon tabs */
.ribbon { display: flex; align-items: center; height: 29px; border-bottom: 1px solid #dadbdc; padding-right: 4px; }
.tab { height: 28px; padding: 0 18px; font-size: 12px; color: #444; }
.tab.file { width: 70px; background: #1979ca; color: #fff; }
.expand { width: 30px; height: 28px; }
.help { width: 18px; height: 18px; margin-left: 4px; border-radius: 50%; background: #0e75d3; color: #fff; font-size: 14px; font-weight: 600; }

/* Address row */
.addressrow { display: flex; align-items: flex-start; height: 44px; padding: 7px 12px 0 13px; }
.navbtns { display: flex; width: 121px; height: 30px; align-items: center; }
.navbtns button { width: 22px; height: 28px; }
.navbtns button + button { margin-left: 17px; }
.navbtns button.small { margin-left: 8px; }
.navbtns .small + button { margin-left: 3px; }
.address { display: flex; flex: 1; align-items: center; height: 28px; border: 1px solid #d9d9d9; }
.address .chev { width: 7px; height: 10px; margin: 0 11px 0 10px; fill: none; stroke: #6d6d6d; stroke-width: 2px; }
.drop { width: 18px; height: 26px; }
.refresh { width: 22px; height: 26px; border-left: 1px solid #d9d9d9; }
.search { display: flex; align-items: center; width: 253px; height: 28px; margin-left: 12px; padding: 0 10px; border: 1px solid #d9d9d9; }
.search input { flex: 1; min-width: 0; padding: 0; border: 0; outline: 0; background: none; font: inherit; }
.search input::placeholder { color: #6d6d6d; opacity: 1; }

/* Toolbar */
.toolbar { display: flex; justify-content: flex-end; align-items: center; height: 38px; padding-right: 4px; border-bottom: 1px solid #dadbdc; }
.tool { width: 40px; height: 37px; }
.tool.on { border: 1px solid #99d1ff; background: #cce8ff; }
.tool.wide { width: 65px; padding-left: 7px; gap: 12px; }
.toolsep { width: 1px; height: 34px; margin: 0 4px 0 3px; background: #8a8a8a; }

/* Panes */
.panes { display: flex; flex: 1; }
.tree { width: 426px; padding: 20px 2px 0 0; border-right: 1px solid #f0f0f0; line-height: 22px; }
.tree ul { margin-bottom: 10px; }
.tree a { display: flex; align-items: center; gap: 6px; height: 30px; padding: 1px 4px 0 39px; }
.tree .top a { padding-left: 30px; gap: 5px; }
.tree .current a { background: #d9d9d9; }
.pin { width: 13px; height: 13px; margin-left: auto; }
.files { display: flex; flex: 1; flex-wrap: wrap; align-content: flex-start; gap: 29px; padding: 8px 20px; }
.file-item { display: flex; flex-direction: column; align-items: center; width: 273px; height: 283px; border: 1px solid transparent; }
.file-item span { line-height: 25px; }
.file-item.selected { border-color: #99d1ff; background: #cce8ff; }
.pdf-text { font-family: "Open Sans", sans-serif; font-size: 75px; font-weight: 600; fill: #666; }

/* Status bars */
.statusbar { display: flex; align-items: center; height: 30px; padding: 0 5px; color: #1e395b; }
.stat { padding: 0 12px; line-height: 14px; border-right: 1px solid #ededed; }
.statusbar button { width: 28px; height: 28px; }
.classicbar { display: flex; align-items: stretch; height: 29px; border-top: 1px solid #d7d7d7; background: #efefef; line-height: 28px; }
.date { flex: 1; padding-left: 2px; }
.cell { width: 107px; margin: 2px 0 1px; border-left: 1px solid #d0d0d0; line-height: 25px; }
.zone { display: flex; flex: none; align-items: center; gap: 4px; width: 226px; padding-left: 4px; }
.grip { align-self: flex-end; margin: 0 1px 2px 0; }

/* Taskbar */
.taskbar { display: flex; align-items: center; height: 38px; background: #0a0b0c; color: #fff; }
.start { width: 46px; height: 38px; margin: 0 9px; overflow: visible; }
.task { width: 46px; height: 38px; }
.task.active { border-bottom: 3px solid #77b3e5; background: #3a3b3c; padding-top: 3px; }
.task.running { width: 36px; margin: 0 5px; padding-top: 3px; border-bottom: 3px solid #77b3e5; }
.tray { width: 30px; height: 38px; }
.people { margin-right: 8px; }
.people svg { fill: none; stroke: #fff; stroke-width: 1.5px; }
.sound-text { font-size: 6px; font-weight: 700; text-anchor: middle; fill: #fff; }
.s { font-size: 19px; font-weight: 700; }
.line { fill: none; stroke: #fff; stroke-width: 1.2px; }
.clock { width: 52px; text-align: center; font-size: 14px; }
.notif { width: 50px; height: 38px; }
.showdesk { width: 6px; height: 38px; margin-left: 9px; border-left: 1px solid #55585a; }
```
